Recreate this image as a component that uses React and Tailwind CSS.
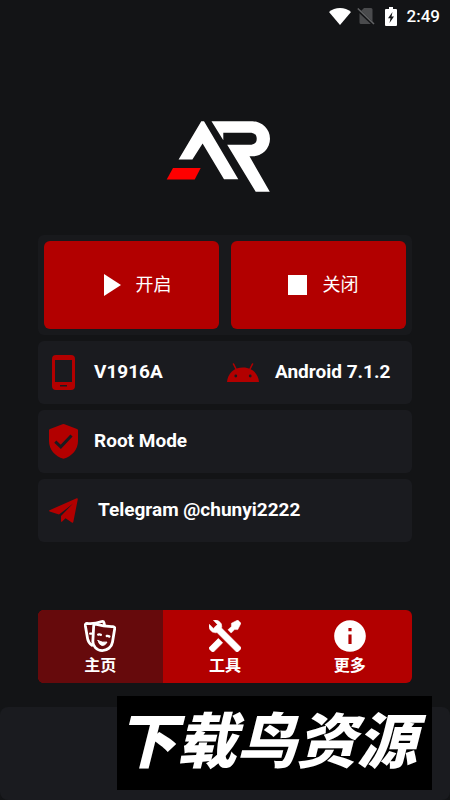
import React, { useState } from 'react';
import { MdInfo } from 'react-icons/md';

function StatusBar() {
  return (
    <header className="flex h-8 items-center justify-end px-2.5 text-white">
      <svg width="22" height="17" viewBox="0 0 22 17" fill="currentColor" aria-hidden="true">
        <path d="M11 17 0 4C3 1.4 6.800 0 11 0s8 1.400 11 4z" />
      </svg>
      <svg className="ml-1.5" width="18" height="18" viewBox="0 0 18 18" aria-hidden="true">
        <path d="M7 1h7a1.500 1.500 0 0 1 1.500 1.500v13A1.500 1.500 0 0 1 14 17H4a1.500 1.500 0 0 1-1.500-1.500V5.500z" fill="#4a4b4d" />
        <path d="M.8 2.600 16.500 17.500" stroke="#131416" strokeWidth="3" />
        <path d="M.8 1.500 17 17" stroke="#626365" strokeWidth="1.600" />
      </svg>
      <svg className="ml-2.5" width="12" height="19" viewBox="0 0 12 19" aria-hidden="true">
        <path d="M4 0h4v2h3q1 0 1 1v15q0 1-1 1H1q-1 0-1-1V3q0-1 1-1h3z" fill="currentColor" />
        <path d="M7.500 5 3 11.200h2.500L4.500 16 9 9.600H6.500z" fill="#131416" />
      </svg>
      <time className="ml-2.5 text-[17px] leading-6 font-medium">2:49</time>
    </header>
  );
}

function Logo() {
  return (
    <svg width="104" height="73" viewBox="11 10 104 73" role="img" aria-label="AR">
      <path
        fill="#fff"
        d="M46.300 11.300h2.700L83.300 69.200H69L47.600 33.500 37.400 49.400H23.600z"
      />
      <path
        fill="#fff"
        d="M56.500 11.300H97.500A17.500 17.500 0 0 1 97.500 46.300H94.500L114.800 81.800H100.700L72.200 34.700H96.500A6 6 0 0 0 96.500 22.800H68.300V30.300z"
      />
      <path fill="#fe0000" d="M18 58h27.700l-6 11.400H11.700z" />
    </svg>
  );
}

function PhoneIcon() {
  return (
    <svg width="23" height="35" viewBox="0 0 23 35" aria-hidden="true">
      <path
        fillRule="evenodd"
        d="M4 0h15a4 4 0 0 1 4 4v27a4 4 0 0 1-4 4H4a4 4 0 0 1-4-4V4a4 4 0 0 1 4-4zM3 5v22h17V5z"
        fill="#b20000"
      />
      <path d="M8 30h7v1.500H8z" fill="#1a1b1f" />
    </svg>
  );
}

function AndroidIcon() {
  return (
    <svg width="32" height="19" viewBox="0 0 32 19" aria-hidden="true">
      <path d="M0 19C.6 10.500 7 4.500 16 4.500S31.400 10.500 32 19z" fill="#b20000" />
      <path d="m9.500 7-3-6M22.500 7l3-6" stroke="#b20000" strokeWidth="1.600" strokeLinecap="round" />
      <circle cx="8.800" cy="13" r="1.400" fill="#1a1b1f" />
      <circle cx="23.200" cy="13" r="1.400" fill="#1a1b1f" />
    </svg>
  );
}

function ShieldIcon() {
  return (
    <svg width="29" height="35" viewBox="0 0 29 35" aria-hidden="true">
      <path
        d="M13.500.3q1-.5 2 0L28 5q1 .4 1 1.500V17c0 8.500-6 15.500-14.500 17.700C6 32.500 0 25.500 0 17V6.500Q0 5.400 1 5z"
        fill="#b20000"
      />
      <path d="m6.300 17.600 5.500 5.200L22.500 11.500" fill="none" stroke="#1a1b1f" strokeWidth="3" />
    </svg>
  );
}

function PlaneIcon() {
  return (
    <svg width="29" height="25" viewBox="0 0 29 25" aria-hidden="true">
      <path
        d="M27.700.2Q29 0 28.800 1.300L24.300 24q-.3 1.300-1.500.5L16.500 20.300l-3.300 3.300q-1.200.9-1.200-.8V18L23.800 5.800 10 16.600.6 13.500q-1.200-.7 0-1.300z"
        fill="#b20000"
      />
    </svg>
  );
}

function MasksIcon() {
  return (
    <svg
      width="32"
      height="32"
      viewBox="0 0 32 32"
      fill="none"
      stroke="currentColor"
      strokeWidth="2.800"
      strokeLinejoin="round"
      strokeLinecap="round"
      aria-hidden="true"
    >
      <path d="M11.500 4.200Q20 6.800 29 6.600q2 .2 1.700 2.200L28.500 22c-.8 5-5 8.600-10.300 8.600S8.300 26 8.900 20.500L9.700 5.600q.2-1.600 1.800-1.400z" />
      <path d="M20.500 5.200 20 2.800q-.4-1.700-2.200-1.300-7.600 2.800-14.800 2-1.900.1-1.700 2l2.300 13.300q.8 4.300 4.400 6.400" />
      <path d="M6.200 13.600h1.300M14.200 14.600q1.400-.6 2.600.2M22.800 16q1.400-.4 2.500.5" strokeWidth="2.400" />
      <path d="M14 20.600q4.500 2.400 9 1.500-1.700 3.600-4.800 3.400-3-.2-4.200-4.900z" fill="currentColor" strokeWidth="1" />
    </svg>
  );
}

function ToolsIcon() {
  return (
    <svg width="32" height="32" viewBox="2 2 20 20" fill="currentColor" aria-hidden="true">
      <path
        d="M21.710 20.290l-1.420 1.420a1 1 0 0 1-1.410 0L7 9.850A3.810 3.810 0 0 1 6 10a4 4 0 0 1-3.780-5.300l2.540 2.540.53-.53 1.420-1.420.53-.53L4.700 2.220A4 4 0 0 1 10 6a3.810 3.810 0 0 1-.15 1l11.860 11.880a1 1 0 0 1 0 1.410M2.290 18.880a1 1 0 0 0 0 1.410l1.420 1.420a1 1 0 0 0 1.410 0l5.470-5.460-2.830-2.830M20 2l-4 2v2l-2.170 2.170 2 2L18 8h2l2-4z"
        stroke="currentColor"
        strokeWidth=".3"
      />
    </svg>
  );
}

const TABS = [
  { id: 'home', label: '主页', icon: <MasksIcon /> },
  { id: 'tools', label: '工具', icon: <ToolsIcon /> },
  { id: 'more', label: '更多', icon: <MdInfo size={38} className="-m-[3px]" /> },
];

function ActionButton({ label, children }) {
  return (
    <button
      type="button"
      className="flex h-22 flex-1 items-center justify-center gap-2 rounded-md bg-[#b20000] text-lg text-white hover:bg-[#c00000]"
    >
      <svg width="36" height="36" viewBox="0 0 36 36" fill="currentColor" aria-hidden="true">
        {children}
      </svg>
      {label}
    </button>
  );
}

function InfoCard({ children }) {
  return (
    <div className="flex h-[63px] items-center rounded-md bg-[#1a1b1f] px-1.5 text-[19px] font-bold">{children}</div>
  );
}

function IconSlot({ children }) {
  return <span className="flex w-[38px] shrink-0 justify-center">{children}</span>;
}

export default function App() {
  const [tab, setTab] = useState('home');

  return (
    <div className="flex min-h-screen flex-col bg-[#131416] font-['Roboto','Noto_Sans_CJK_SC',sans-serif] text-white">
      <StatusBar />

      <main className="flex flex-col px-[38px] pt-22">
        <div className="flex justify-center pr-3.5">
          <Logo />
        </div>

        <div className="mt-[42px] flex flex-col gap-1.5">
          <div className="flex gap-3 rounded-md bg-[#18191c] p-1.5">
            <ActionButton label="开启">
              <path d="M12 7v22l17-11z" />
            </ActionButton>
            <ActionButton label="关闭">
              <path d="M9 8h19v20H9z" />
            </ActionButton>
          </div>

          <InfoCard>
            <div className="flex flex-1 items-center gap-3">
              <IconSlot>
                <PhoneIcon />
              </IconSlot>
              V1916A
            </div>
            <div className="flex flex-1 items-center gap-4 pl-1 whitespace-nowrap">
              <AndroidIcon />
              Android 7.1.2
            </div>
          </InfoCard>

          <InfoCard>
            <div className="flex items-center gap-3">
              <IconSlot>
                <ShieldIcon />
              </IconSlot>
              Root Mode
            </div>
          </InfoCard>

          <InfoCard>
            <a href="https://t.me/chunyi2222" className="flex items-center gap-4">
              <IconSlot>
                <PlaneIcon />
              </IconSlot>
              Telegram @chunyi2222
            </a>
          </InfoCard>
        </div>

        <nav className="mt-17 flex overflow-hidden rounded-md bg-[#b20000]">
          {TABS.map((t) => (
            <button
              key={t.id}
              type="button"
              onClick={() => setTab(t.id)}
              className={`flex h-[73px] flex-1 flex-col items-center justify-center gap-1 pt-0.5 text-base leading-5 font-bold ${
                tab === t.id ? 'bg-[#660a0c]' : ''
              }`}
            >
              {t.icon}
              <span>{t.label}</span>
            </button>
          ))}
        </nav>
      </main>

      <footer className="relative mt-6 min-h-[92px] flex-1 rounded-lg bg-[#1a1b1f]">
        <p className="absolute right-[18px] bottom-2.5 flex h-[94px] w-[315px] items-center justify-center bg-black pr-4 text-[60px] leading-none font-black whitespace-nowrap italic">
          下载鸟资源
        </p>
      </footer>
    </div>
  );
}
